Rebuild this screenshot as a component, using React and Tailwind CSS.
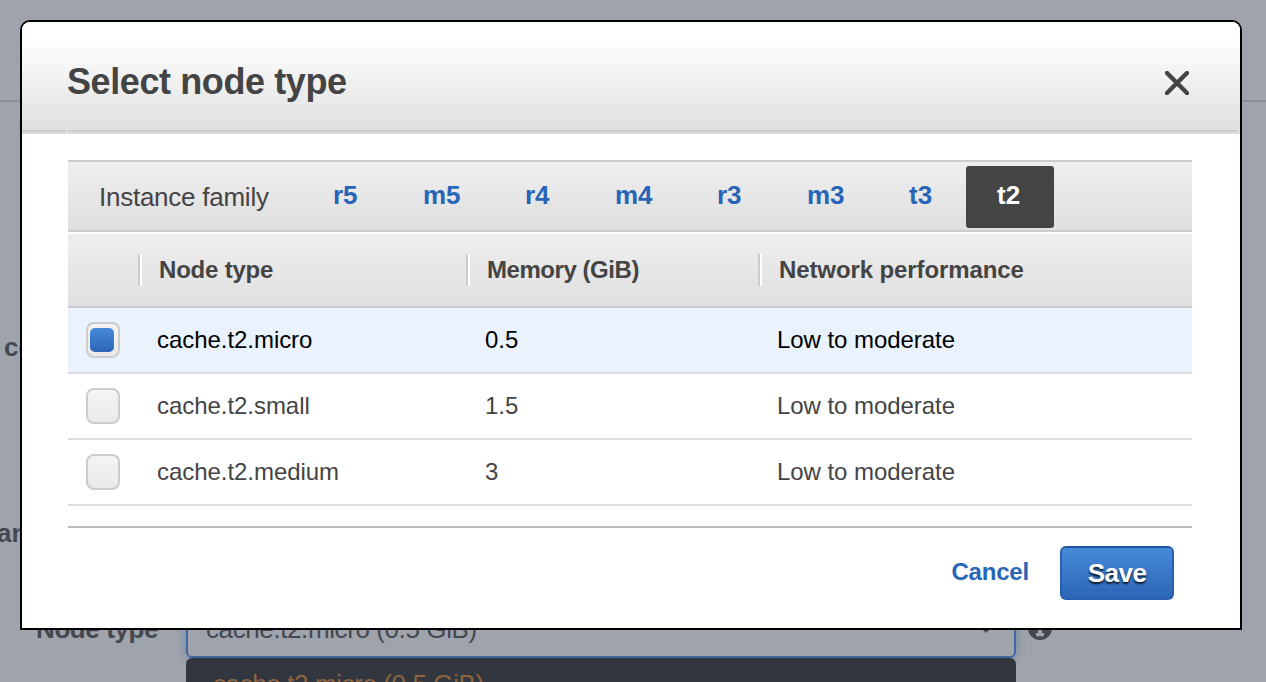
import React from "react";

const families = [
  { name: "r5", width: "w-[90px]" },
  { name: "m5", width: "w-[102px]" },
  { name: "r4", width: "w-[90px]" },
  { name: "m4", width: "w-[102px]" },
  { name: "r3", width: "w-[90px]" },
  { name: "m3", width: "w-[102px]" },
  { name: "t3", width: "w-[88px]" },
  { name: "t2", width: "w-[88px]", active: true },
];

const nodes = [
  { type: "cache.t2.micro", memory: "0.5", network: "Low to moderate", checked: true },
  { type: "cache.t2.small", memory: "1.5", network: "Low to moderate" },
  { type: "cache.t2.medium", memory: "3", network: "Low to moderate" },
];

function FamilyTab({ name, width, active }) {
  return (
    <button
      className={`${width} h-[62px] pb-1 pl-[31px] text-left text-[26px] font-bold ${
        active ? "rounded-[3px] bg-[#444444] text-white" : "text-[#2865b8]"
      }`}
    >
      {name}
    </button>
  );
}

function HeaderCell({ children, tracking }) {
  return (
    <div className="flex h-8 items-center border-l-2 border-[#cccccc]">
      <div className={`flex h-8 items-center border-l-2 border-white pl-[17px] ${tracking}`}>{children}</div>
    </div>
  );
}

function Checkbox({ checked }) {
  return (
    <span className="flex h-9 w-[34px] rounded-lg border-2 border-[#cccccc] bg-linear-to-b from-[#f5f5f5] to-[#e9e9e9] pt-1 pl-0.5">
      {checked && <span className="h-6 w-6 rounded-[5px] bg-linear-to-b from-[#478ada] to-[#2c66b6]" />}
    </span>
  );
}

function NodeRow({ node }) {
  return (
    <div
      className={`grid h-[66px] grid-cols-[70px_328px_292px_1fr] items-center border-b-2 border-[#dddddd] text-2xl tracking-[-0.05px] ${
        node.checked ? "bg-[#eaf2fd] text-black" : "text-[#444444]"
      }`}
    >
      <div className="pl-[18px]">
        <Checkbox checked={node.checked} />
      </div>
      <div className="pl-[19px]">{node.type}</div>
      <div className="pl-[19px]">{node.memory}</div>
      <div className="pl-[19px]">{node.network}</div>
    </div>
  );
}

function PageForm() {
  return (
    <div className="flex h-full flex-col text-[26px] text-[#444850]">
      <div className="h-[102px] shrink-0 border-b-2 border-[#8b8f98]" />
      <div className="mt-[229px] h-8 shrink-0 pl-1 leading-8 font-bold">co</div>
      <div className="mt-[154px] h-8 shrink-0 -ml-[3px] leading-8 font-bold">an</div>
      <div className="mt-[49px] flex h-[60px] shrink-0">
        <div className="w-[186px] pt-[15px] pl-9 leading-8 font-bold tracking-[-0.4px]">Node type</div>
        <div className="flex w-[830px] justify-between rounded-md border-2 border-[#42699f] pt-[13px] pr-[21px] pl-[18px] leading-8 tracking-[-0.4px] shadow-[0_0_10px_rgba(66,105,159,0.5)]">
          <span>cache.t2.micro (0.5 GiB)</span>
          <svg className="mt-[10px]" width="14" height="12" viewBox="0 0 14 12">
            <path d="M0 3H14L7 10Z" fill="#444850" />
          </svg>
        </div>
        <svg className="mt-[18px] ml-3" width="24" height="24" viewBox="0 0 24 24">
          <circle cx="12" cy="12" r="12" fill="#444850" />
          <path d="M10 4h4v4h-4zM8 9.500h6v7.500h2v3.200H8v-3.200h2v-5H8z" fill="#9fa3ab" />
        </svg>
      </div>
      <div className="ml-[186px] h-[60px] w-[830px] shrink-0 rounded-md bg-[#32363e] pt-[10px] pl-[27px] leading-8 tracking-[-0.4px] text-[#8e6340]">
        cache.t2.micro (0.5 GiB)
      </div>
    </div>
  );
}

function NodeTypeDialog() {
  return (
    <div className="absolute top-5 left-5 flex h-[610px] w-[1222px] flex-col overflow-hidden rounded-t-[10px] border-2 border-black bg-white text-[#444444]">
      <div className="flex h-[108px] shrink-0 items-center justify-between bg-linear-to-b from-white from-15% to-[#e0e0e0] pt-[11px] pr-[51px] pl-[45px]">
        <h1 className="text-4xl font-bold tracking-[-0.4px]">Select node type</h1>
        <svg className="mt-0.5" width="24" height="24" viewBox="0 0 24 24">
          <path d="M2 2L22 22M22 2L2 22" fill="none" stroke="#444444" strokeWidth="4.400" strokeLinecap="round" />
        </svg>
      </div>
      <div className="flex h-1 shrink-0 gap-0.5 border-b-2 border-[#dddddd] bg-[#e0e0e0] pr-0.5">
        <span className="h-0.5 w-11 bg-[#cccccc]" />
        <span className="h-0.5 flex-1 bg-[#cccccc]" />
      </div>

      <div className="mt-[26px] mr-12 ml-[46px]">
        <div className="flex h-[72px] border-y-2 border-[#cccccc] bg-linear-to-b from-[#eeeeee] to-[#e0e0e0] pt-1">
          <div className="w-[234px] pl-[31px] text-[26px] leading-[62px] tracking-[-0.25px]">Instance family</div>
          {families.map((family) => (
            <FamilyTab key={family.name} {...family} />
          ))}
        </div>
        <div className="mt-0.5 grid h-[74px] grid-cols-[70px_328px_292px_1fr] items-center border-b-2 border-[#cccccc] bg-linear-to-b from-[#eeeeee] to-[#e0e0e0] text-2xl font-bold">
          <div />
          <HeaderCell tracking="tracking-[-0.2px]">Node type</HeaderCell>
          <HeaderCell tracking="tracking-[-0.45px]">Memory (GiB)</HeaderCell>
          <HeaderCell tracking="tracking-[-0.1px]">Network performance</HeaderCell>
        </div>
        {nodes.map((node) => (
          <NodeRow key={node.type} node={node} />
        ))}
        <div className="mt-5 flex items-center justify-end gap-[31px] border-t-2 border-[#bbbbbb] pt-[18px] pr-[18px] font-bold">
          <button className="pb-[3px] text-2xl tracking-[-0.2px] text-[#2865b8]">Cancel</button>
          <button className="h-[54px] w-[114px] rounded-md border-2 border-[#2860ae] border-t-[#2057a2] bg-linear-to-b from-[#478ada] to-[#2c66b6] text-[26px] tracking-[-0.5px] text-white [text-shadow:0_2px_2px_rgba(0,0,0,0.8)]">
            Save
          </button>
        </div>
      </div>
    </div>
  );
}

export default function App() {
  return (
    <div className="relative h-[682px] w-[1266px] overflow-hidden bg-[#9fa3ab] font-['Liberation_Sans',Arial,sans-serif]">
      <PageForm />
      <NodeTypeDialog />
    </div>
  );
}
